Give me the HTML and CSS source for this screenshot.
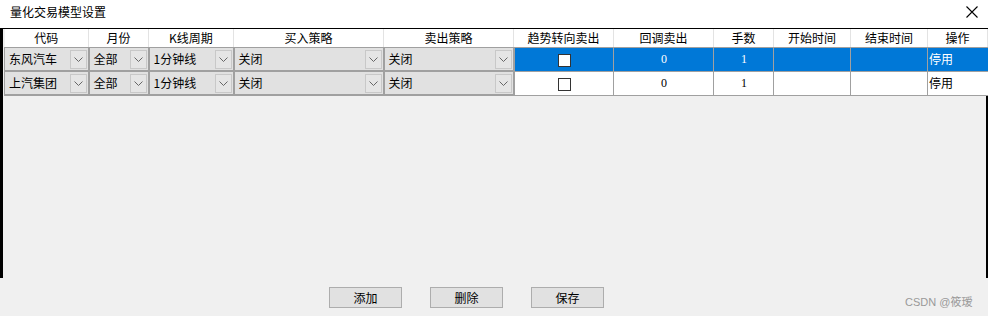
FILE: index.html
```html
<!DOCTYPE html>
<html lang="zh">
<head>
  <meta charset="UTF-8" />
  <meta name="viewport" content="width=device-width, initial-scale=1.0">
  <title>量化交易模型设置</title>
  <link rel="stylesheet" href="styles.css">
</head>
<body>
  <div class="titlebar">
    <span class="title">量化交易模型设置</span>
    <svg class="close" width="12" height="12" viewBox="0 0 12 12"><path d="M0.5 0.5 L11.5 11.5 M11.5 0.5 L0.5 11.5" stroke="#000" stroke-width="1.1" fill="none"/></svg>
  </div>

  <!-- 表格 -->
  <div class="grid">
    <table class="tabla">
      <colgroup>
        <col style="width:84px"><col style="width:60px"><col style="width:85px"><col style="width:150px">
        <col style="width:130px"><col style="width:100px"><col style="width:100px"><col style="width:60px">
        <col style="width:77px"><col style="width:77px"><col style="width:60px">
      </colgroup>
      <tr>
        <th>代码</th><th>月份</th><th>K线周期</th><th>买入策略</th><th>卖出策略</th><th>趋势转向卖出</th>
        <th>回调卖出</th><th>手数</th><th>开始时间</th><th>结束时间</th><th>操作</th>
      </tr>
      <tr class="sel">
        <td class="cb"><div class="combo"><span>东风汽车</span><i class="btn"><svg width="9" height="5" viewBox="0 0 9 5"><polyline points="0.5,0.5 4.5,4.5 8.5,0.5" fill="none" stroke="#666"/></svg></i></div></td>
        <td class="cb"><div class="combo"><span>全部</span><i class="btn"><svg width="9" height="5" viewBox="0 0 9 5"><polyline points="0.5,0.5 4.5,4.5 8.5,0.5" fill="none" stroke="#666"/></svg></i></div></td>
        <td class="cb"><div class="combo"><span>1分钟线</span><i class="btn"><svg width="9" height="5" viewBox="0 0 9 5"><polyline points="0.5,0.5 4.5,4.5 8.5,0.5" fill="none" stroke="#666"/></svg></i></div></td>
        <td class="cb"><div class="combo"><span>关闭</span><i class="btn"><svg width="9" height="5" viewBox="0 0 9 5"><polyline points="0.5,0.5 4.5,4.5 8.5,0.5" fill="none" stroke="#666"/></svg></i></div></td>
        <td class="cb"><div class="combo"><span>关闭</span><i class="btn"><svg width="9" height="5" viewBox="0 0 9 5"><polyline points="0.5,0.5 4.5,4.5 8.5,0.5" fill="none" stroke="#666"/></svg></i></div></td>
        <td class="center"><span class="check"></span></td>
        <td class="center num">0</td>
        <td class="center num">1</td>
        <td></td>
        <td></td>
        <td>停用</td>
      </tr>
      <tr>
        <td class="cb"><div class="combo"><span>上汽集团</span><i class="btn"><svg width="9" height="5" viewBox="0 0 9 5"><polyline points="0.5,0.5 4.5,4.5 8.5,0.5" fill="none" stroke="#666"/></svg></i></div></td>
        <td class="cb"><div class="combo"><span>全部</span><i class="btn"><svg width="9" height="5" viewBox="0 0 9 5"><polyline points="0.5,0.5 4.5,4.5 8.5,0.5" fill="none" stroke="#666"/></svg></i></div></td>
        <td class="cb"><div class="combo"><span>1分钟线</span><i class="btn"><svg width="9" height="5" viewBox="0 0 9 5"><polyline points="0.5,0.5 4.5,4.5 8.5,0.5" fill="none" stroke="#666"/></svg></i></div></td>
        <td class="cb"><div class="combo"><span>关闭</span><i class="btn"><svg width="9" height="5" viewBox="0 0 9 5"><polyline points="0.5,0.5 4.5,4.5 8.5,0.5" fill="none" stroke="#666"/></svg></i></div></td>
        <td class="cb"><div class="combo"><span>关闭</span><i class="btn"><svg width="9" height="5" viewBox="0 0 9 5"><polyline points="0.5,0.5 4.5,4.5 8.5,0.5" fill="none" stroke="#666"/></svg></i></div></td>
        <td class="center"><span class="check"></span></td>
        <td class="center num">0</td>
        <td class="center num">1</td>
        <td></td>
        <td></td>
        <td>停用</td>
      </tr>
    </table>
  </div>

  <!-- 按钮 -->
  <div class="acciones">
    <button class="boton">添加</button>
    <button class="boton">删除</button>
    <button class="boton">保存</button>
  </div>

  <div class="marca">CSDN @筱瑷</div>
</body>
</html>
```

FILE: styles.css
```css
body {
  margin: 0;
  background: #f0f0f0;
  font-family: "Noto Sans CJK SC", "Liberation Sans", sans-serif;
  font-size: 12px;
  color: #000;
  position: relative;
  height: 316px;
  overflow: hidden;
}

.titlebar {
  height: 28px;
  background: #fff;
  display: flex;
  align-items: center;
  justify-content: space-between;
  padding: 0 10px 0 10px;
}
.title { font-size: 12px; line-height: 14px; margin-top: -4px; }
.close { margin-right: 0; margin-top: -5px; }

.grid {
  height: 249px;
  border-top: 1px solid #000;
  border-left: 3px solid #000;
  border-right: 2px solid #000;
  padding-left: 1px;
}

.tabla {
  border-collapse: collapse;
  table-layout: fixed;
  width: 983px;
}
.tabla th {
  height: 18px;
  padding: 0;
  background: #fff;
  font-weight: normal;
  font-size: 12px;
  line-height: 16px;
  border-right: 1px solid #e3e3e3;
  border-bottom: 1px solid #a0a0a0;
}
.tabla td {
  height: 22px;
  padding: 0 0 0 1px;
  background: #fff;
  border: 1px solid #a0a0a0;
  border-top: none;
  font-size: 12px;
  line-height: 16px;
  white-space: nowrap;
}
.tabla td:last-child { border-right: none; }
.tabla tr.sel td { background: #0078d7; color: #fff; }
.tabla tr.sel td.cb, .tabla td.cb {
  background: #e1e1e1;
  color: #000;
  padding: 0;
  border-right: 2px solid #a0a0a0;
  border-bottom: 2px solid #a0a0a0;
}
.center { text-align: center; }
.num { font-family: "Liberation Serif", serif; font-size: 12px; }

.combo {
  display: flex;
  align-items: center;
  justify-content: space-between;
  height: 21px;
  padding-left: 4px;
  font-size: 12px;
}
.btn {
  display: flex;
  align-items: center;
  justify-content: center;
  width: 15px;
  height: 17px;
  margin-right: 1px;
  border: 1px solid #c8c8c8;
  background: #e5e5e5;
}

.check {
  display: inline-block;
  width: 11px;
  height: 11px;
  border: 1px solid #333;
  background: #fff;
  vertical-align: middle;
}

.acciones {
  display: flex;
  gap: 28px;
  padding: 9px 0 0 329px;
}
.boton {
  width: 73px;
  height: 21px;
  padding: 0;
  background: #e1e1e1;
  border: 1px solid #adadad;
  font-family: "Noto Sans CJK SC", sans-serif;
  font-size: 12px;
  color: #000;
}

.marca {
  position: absolute;
  left: 905px;
  top: 293px;
  font-size: 11px;
  color: #999;
  font-family: "Liberation Sans", "Noto Sans CJK SC", sans-serif;
}
```
